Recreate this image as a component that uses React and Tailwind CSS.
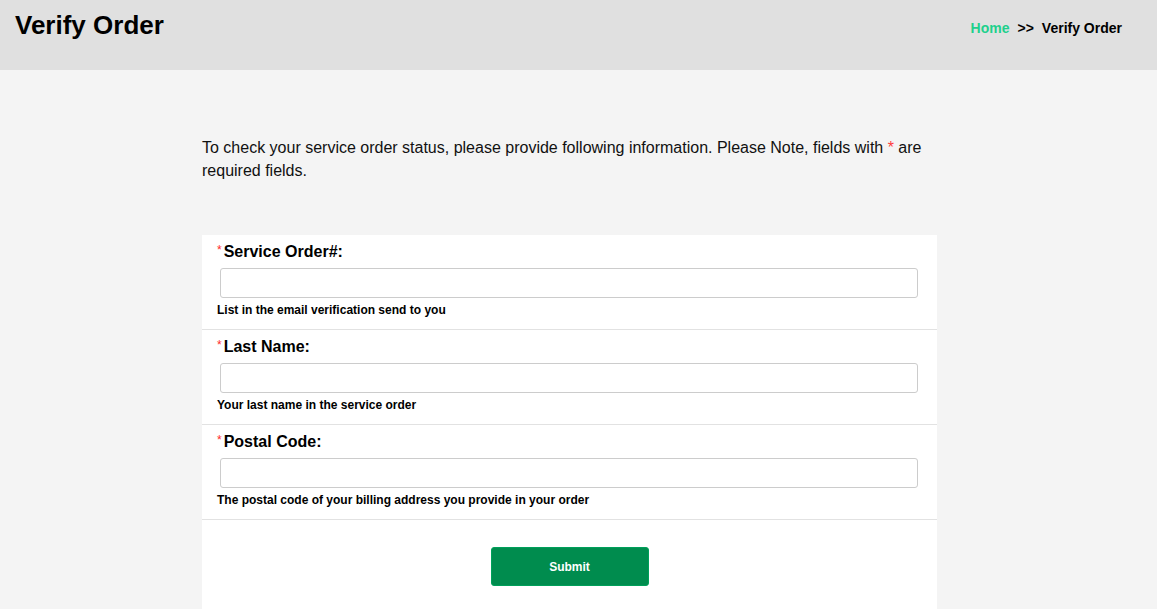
export default function App() {
  const fields = [
    { label: "Service Order#:", help: "List in the email verification send to you" },
    { label: "Last Name:", help: "Your last name in the service order" },
    { label: "Postal Code:", help: "The postal code of your billing address you provide in your order" },
  ];
  return (
    <div className="min-h-[609px] bg-[#f4f4f4] text-black" style={{ fontFamily: '"Liberation Sans", Arial, sans-serif' }}>
      <header className="h-[70px] bg-[#e0e0e0] flex items-start justify-between pl-[15px] pr-[35px]">
        <h1 className="text-[26px] font-bold leading-[30px] mt-[10px]">Verify Order</h1>
        <div className="mt-[19px] text-[14px] font-bold leading-[18px] flex gap-[8px]">
          <span className="text-[#20d08c]">Home</span>
          <span>&gt;&gt;</span>
          <span>Verify Order</span>
        </div>
      </header>
      <main className="w-[735px] ml-[202px] pt-[66px]">
        <p className="text-[16px] leading-[23px] text-[#111]">
          To check your service order status, please provide following information. Please Note, fields with{" "}
          <span className="text-[#ff3b3b]">*</span> are required fields.
        </p>
        <div className="mt-[53px] bg-white">
          {fields.map((f) => (
            <div key={f.label} className="px-[15px] pt-[7px] pb-[11px] border-b border-[#e2e2e2]">
              <div className="flex items-start leading-[20px]">
                <span className="text-[#ff2a2a] text-[12px] leading-[14px] mt-[1px] mr-[2px]">*</span>
                <span className="text-[16px] font-bold">{f.label}</span>
              </div>
              <input className="block mt-[6px] ml-[3px] mr-[4px] w-[calc(100%-7px)] h-[30px] border border-[#cccccc] rounded-[3px] bg-white px-2 outline-none" />
              <div className="mt-[5px] text-[12px] font-bold leading-[15px]">{f.help}</div>
            </div>
          ))}
          <div className="flex justify-center pt-[27px] pb-[30px]">
            <button className="w-[158px] h-[39px] bg-[#008c4e] rounded-[3px] border border-[#00a05a] text-white text-[12px] font-bold">
              Submit
            </button>
          </div>
        </div>
      </main>
    </div>
  );
}
